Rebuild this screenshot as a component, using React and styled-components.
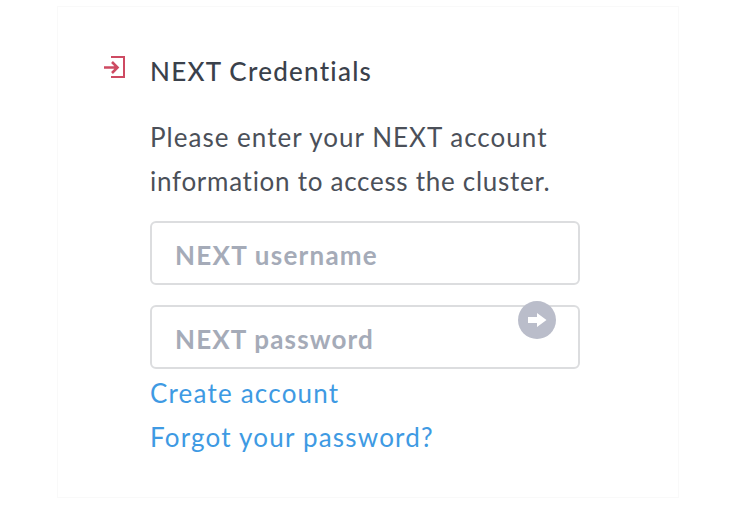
import React from "react";
import styled, { createGlobalStyle } from "styled-components";

const GlobalStyle = createGlobalStyle`
  *, *::before, *::after { box-sizing: border-box; }
  body { margin: 0; background: #fff; }
`;

const Page = styled.main`
  height: 508px;
  padding: 6px 57px 0;
  overflow: hidden;
  font-family: Lato, "Open Sans", sans-serif;
  font-size: 26px;
  line-height: 44px;
  color: #4b5059;
`;

const Card = styled.section`
  width: 622px;
  height: 492px;
  padding: 42px 0 0 46px;
  border: 1px solid #f9f9f9;
  display: grid;
  grid-template-columns: 22px 430px;
  column-gap: 24px;
  align-content: start;
`;

const LoginIcon = styled.svg`
  width: 22px;
  height: 24px;
  margin-top: 6px;
`;

const Content = styled.div`
  display: flex;
  flex-direction: column;
`;

const Title = styled.h1`
  margin: 0 0 22px;
  font-size: 26px;
  font-weight: 500;
  line-height: 44px;
  letter-spacing: 1.25px;
  color: #3a414b;
`;

const Line = styled.span`
  display: block;
  white-space: nowrap;
  letter-spacing: ${(p) => p.$spacing}px;
`;

const Form = styled.form`
  display: flex;
  flex-direction: column;
  gap: 20px;
  margin: 18px 0 2px;
`;

const Field = styled.div`
  position: relative;
  height: 64px;
`;

const Input = styled.input`
  display: block;
  width: 430px;
  height: 64px;
  padding: 4px 23px 0;
  border: 2px solid #dcdddf;
  border-radius: 6px;
  background: #fff;
  font: 700 26px Lato, "Open Sans", sans-serif;
  letter-spacing: ${(p) => p.$spacing}px;
  outline: none;
  &::placeholder { color: #a5abb8; opacity: 1; }
`;

const Submit = styled.button`
  position: absolute;
  top: -4px;
  right: 24px;
  width: 38px;
  height: 38px;
  padding: 0;
  border: 0;
  border-radius: 50%;
  background: #babdca;
  svg { display: block; }
`;

const Link = styled.a`
  align-self: flex-start;
  white-space: nowrap;
  color: #3e9ae3;
  letter-spacing: ${(p) => p.$spacing}px;
`;

export default function App() {
  return (
    <>
      <GlobalStyle />
      <Page>
        <Card>
          <LoginIcon viewBox="0 0 22 24" fill="none" stroke="#ce4a62" strokeWidth="2">
            <path d="M7 2H20V22H7" />
            <path d="M0 12.5H13M8 7L13.5 12.5L8 18" strokeWidth="2.6" />
          </LoginIcon>
          <Content>
            <Title>NEXT Credentials</Title>
            <Line $spacing={1.02}>Please enter your NEXT account</Line>
            <Line $spacing={0.72}>information to access the cluster.</Line>
            <Form>
              <Field>
                <Input $spacing={1.25} placeholder="NEXT username" aria-label="NEXT username" />
              </Field>
              <Field>
                <Input $spacing={1.15} type="password" placeholder="NEXT password" aria-label="NEXT password" />
                <Submit type="button" aria-label="Sign in">
                  <svg width="38" height="38" viewBox="0 0 38 38">
                    <path d="M10 16H19V12L28.5 19L19 26V22H10Z" fill="#fff" />
                  </svg>
                </Submit>
              </Field>
            </Form>
            <Link $spacing={1.2}>Create account</Link>
            <Link $spacing={1.2}>Forgot your password?</Link>
          </Content>
        </Card>
      </Page>
    </>
  );
}
